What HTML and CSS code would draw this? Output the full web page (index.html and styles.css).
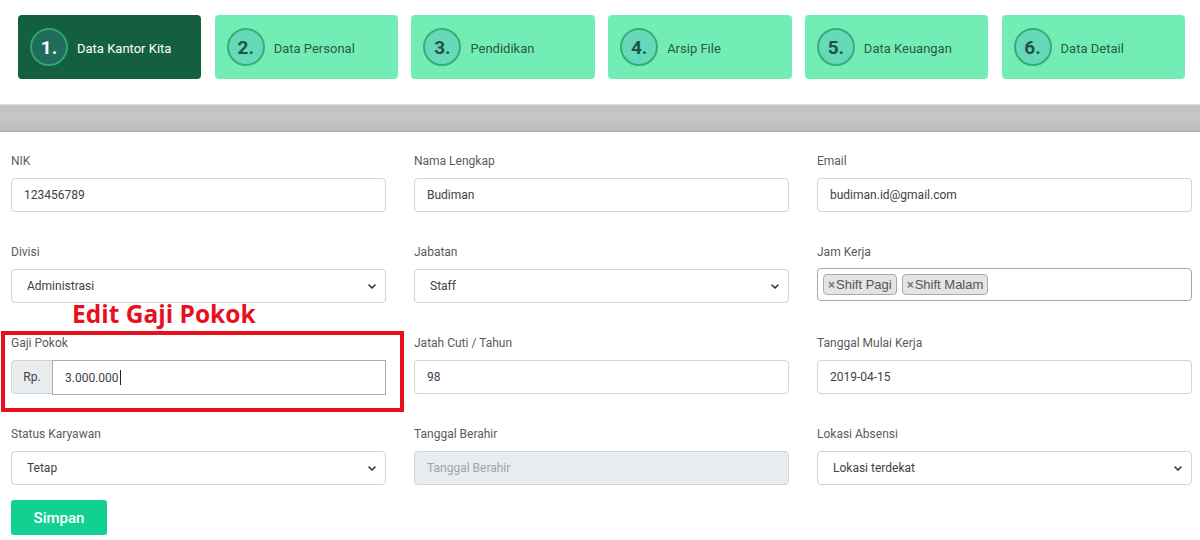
FILE: index.html
```html
<!DOCTYPE html>
<html lang="id">
<head>
<meta charset="utf-8">
<title>Data Karyawan</title>
<link rel="stylesheet" href="styles.css">
</head>
<body>
<div class="page">
  <header class="steps">
    <div class="step active"><span class="num">1.</span><span class="step-label">Data Kantor Kita</span></div>
    <div class="step"><span class="num">2.</span><span class="step-label">Data Personal</span></div>
    <div class="step"><span class="num">3.</span><span class="step-label">Pendidikan</span></div>
    <div class="step"><span class="num">4.</span><span class="step-label">Arsip File</span></div>
    <div class="step"><span class="num">5.</span><span class="step-label">Data Keuangan</span></div>
    <div class="step"><span class="num">6.</span><span class="step-label">Data Detail</span></div>
  </header>
  <div class="band"></div>
  <main class="form">
    <div class="grid">
      <div class="field">
        <label class="label">NIK</label>
        <div class="control">123456789</div>
      </div>
      <div class="field">
        <label class="label">Nama Lengkap</label>
        <div class="control">Budiman</div>
      </div>
      <div class="field">
        <label class="label">Email</label>
        <div class="control">budiman.id@gmail.com</div>
      </div>

      <div class="field">
        <label class="label">Divisi</label>
        <div class="control select"><span>Administrasi</span><svg class="chev" viewBox="0 0 8 5" width="8" height="5"><path d="M1 1l3 3 3-3" fill="none" stroke="#333" stroke-width="1.6" stroke-linecap="round" stroke-linejoin="round"/></svg></div>
      </div>
      <div class="field">
        <label class="label">Jabatan</label>
        <div class="control select"><span>Staff</span><svg class="chev" viewBox="0 0 8 5" width="8" height="5"><path d="M1 1l3 3 3-3" fill="none" stroke="#333" stroke-width="1.6" stroke-linecap="round" stroke-linejoin="round"/></svg></div>
      </div>
      <div class="field">
        <label class="label">Jam Kerja</label>
        <div class="control multi">
          <span class="tag"><b class="x">×</b>Shift Pagi</span>
          <span class="tag"><b class="x">×</b>Shift Malam</span>
        </div>
      </div>

      <div class="field">
        <label class="label">Gaji Pokok</label>
        <div class="group">
          <span class="addon">Rp.</span>
          <div class="control grouped">3.000.000<span class="caret"></span></div>
        </div>
      </div>
      <div class="field">
        <label class="label">Jatah Cuti / Tahun</label>
        <div class="control">98</div>
      </div>
      <div class="field">
        <label class="label">Tanggal Mulai Kerja</label>
        <div class="control">2019-04-15</div>
      </div>

      <div class="field">
        <label class="label">Status Karyawan</label>
        <div class="control select"><span>Tetap</span><svg class="chev" viewBox="0 0 8 5" width="8" height="5"><path d="M1 1l3 3 3-3" fill="none" stroke="#333" stroke-width="1.6" stroke-linecap="round" stroke-linejoin="round"/></svg></div>
      </div>
      <div class="field">
        <label class="label">Tanggal Berahir</label>
        <div class="control disabled">Tanggal Berahir</div>
      </div>
      <div class="field">
        <label class="label">Lokasi Absensi</label>
        <div class="control select"><span>Lokasi terdekat</span><svg class="chev" viewBox="0 0 8 5" width="8" height="5"><path d="M1 1l3 3 3-3" fill="none" stroke="#333" stroke-width="1.6" stroke-linecap="round" stroke-linejoin="round"/></svg></div>
      </div>
    </div>
    <div class="actions">
      <button class="btn">Simpan</button>
    </div>
  </main>
  <div class="note-title">Edit Gaji Pokok</div>
  <div class="note-box"></div>
</div>
</body>
</html>
```

FILE: styles.css
```css
* { box-sizing: border-box; }
html, body { margin: 0; padding: 0; background: #fff; }
body {
  font-family: Roboto, "Liberation Sans", Arial, sans-serif;
  width: 1200px;
  height: 540px;
  overflow: hidden;
}
.page { position: relative; }

.steps {
  display: grid;
  grid-template-columns: repeat(6, 1fr);
  column-gap: 13.3px;
  padding: 15px 15px 0 18px;
  height: 104px;
}
.step {
  height: 64px;
  border-radius: 4px;
  background: #72edb6;
  display: flex;
  align-items: center;
  padding: 2px 0 0 12px;
  color: #2a5a48;
}
.step .num {
  width: 38px;
  height: 38px;
  margin-top: -2px;
  border-radius: 50%;
  border: 2px solid #38ad74;
  background: #66d9bb;
  display: flex;
  align-items: center;
  justify-content: center;
  font-weight: 700;
  font-size: 19px;
  color: #1d5444;
  flex: none;
}
.step .step-label {
  margin-left: 9px;
  font-size: 13px;
}
.step.active { background: #145f40; color: #fff; }
.step.active .num { background: #1f6d5a; border-color: #2fa56c; color: #fff; }

.band {
  height: 28px;
  background: linear-gradient(#e4e4e4 0, #c0c0c0 2px, #c6c6c6 50%, #bdbdbd 92%, #a9a9a9 100%);
}

.form { padding: 20px 8px 0 11px; }
.grid {
  display: grid;
  grid-template-columns: repeat(3, 375px);
  column-gap: 28px;
  row-gap: 31px;
}
.label {
  display: block;
  font-size: 12px;
  line-height: 18px;
  color: #5b5b5b;
  margin-bottom: 8px;
}
.control {
  height: 34px;
  border: 1px solid #cfd4da;
  border-radius: 4px;
  padding: 0 12px;
  display: flex;
  align-items: center;
  font-size: 12px;
  color: #3d4249;
  background: #fff;
}
.control.select {
  justify-content: space-between;
  padding: 0 6px 0 15px;
}
.chev { display: block; margin-right: 3px; }
.control.disabled { background: #e9ecef; color: #a0a4a8; }
.control.multi {
  border-color: #a8a8a8;
  height: 33px;
  margin-top: -1px;
  padding: 0 5px;
  gap: 5px;
}
.tag {
  display: inline-flex;
  align-items: center;
  height: 21px;
  padding: 0 4px 0 4px;
  background: #e4e4e4;
  border: 1px solid #aaa;
  border-radius: 4px;
  font-family: "Liberation Sans", Arial, sans-serif;
  font-size: 13px;
  color: #555;
}
.tag .x { color: #777; font-size: 12px; margin-right: 1px; }

.group { display: flex; height: 34px; }
.addon {
  width: 42px;
  display: flex;
  align-items: center;
  justify-content: center;
  background: #e9ecef;
  border: 1px solid #cfd4da;
  border-radius: 4px 0 0 4px;
  font-size: 12px;
  color: #3d4249;
}
.control.grouped {
  flex: 1;
  height: 35px;
  border-radius: 0;
  border: 1px solid #a9abae;
  margin-left: -1px;
  width: 334px;
}
.caret {
  display: inline-block;
  width: 1px;
  height: 15px;
  background: #222;
  margin-left: 1px;
}

.actions { margin-top: 15px; }
.btn {
  width: 96px;
  height: 35px;
  border: none;
  border-radius: 3px;
  background: #12cf92;
  color: #fff;
  font-family: Roboto, "Liberation Sans", sans-serif;
  font-size: 15px;
  font-weight: 500;
}

.note-title {
  position: absolute;
  left: 72px;
  top: 298px;
  font-family: "Open Sans", "Liberation Sans", sans-serif;
  font-weight: 700;
  font-size: 24.5px;
  line-height: 32px;
  color: #e8101d;
}
.note-box {
  position: absolute;
  left: 1px;
  top: 331px;
  width: 403px;
  height: 81px;
  border: 4px solid #e8101d;
}
```
